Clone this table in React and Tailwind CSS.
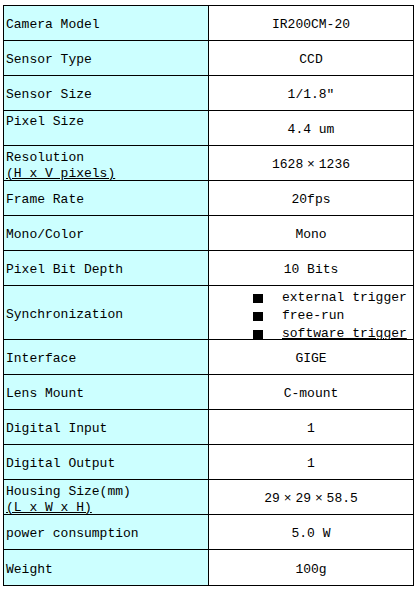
const rows = [
  { l: ["Camera Model"], r: "IR200CM-20" },
  { l: ["Sensor Type"], r: "CCD" },
  { l: ["Sensor Size"], r: "1/1.8″" },
  { l: ["Pixel Size"], r: "4.4 um", top: "pt-[3px]" },
  { l: ["Resolution", "(H x V pixels)"], r: "1628×1236", top: "pt-[4px]" },
  { l: ["Frame Rate"], r: "20fps" },
  { l: ["Mono/Color"], r: "Mono" },
  { l: ["Pixel Bit Depth"], r: "10 Bits" },
  { l: ["Synchronization"], sync: true },
  { l: ["Interface"], r: "GIGE" },
  { l: ["Lens Mount"], r: "C-mount" },
  { l: ["Digital Input"], r: "1" },
  { l: ["Digital Output"], r: "1" },
  { l: ["Housing Size(mm)", "(L x W x H)"], r: "29×29×58.5", top: "pt-[4px]" },
  { l: ["power consumption"], r: "5.0 W" },
  { l: ["Weight"], r: "100g" },
];

function Value({ text }) {
  const parts = text.split("×");
  return (
    <span className="whitespace-pre">
      {parts.map((p, i) => (
        <span key={i}>
          {p}
          {i < parts.length - 1 && (
            <span className="inline-block w-[15.6px] text-center">×</span>
          )}
        </span>
      ))}
    </span>
  );
}

export default function App() {
  return (
    <div
      className="w-[418px] h-[589px] bg-white pt-[5px] pl-[3px] text-black text-[13px]"
      style={{ fontFamily: '"Liberation Mono", "DejaVu Sans Mono", monospace' }}
    >
      <div className="w-[411px] border border-black">
        {rows.map((row, i) => {
          const last = i === rows.length - 1;
          const h = row.sync ? "h-[54px]" : "h-[35px]";
          return (
            <div
              key={i}
              className={`flex ${h} ${last ? "" : "border-b border-black"}`}
            >
              <div
                className={`w-[205px] shrink-0 border-r border-black bg-[#ccffff] pl-[2px] flex flex-col leading-[16px] whitespace-pre ${
                  row.top ? row.top + " justify-start" : "pt-[4px] justify-center"
                }`}
              >
                {row.l.map((t, j) => (
                  <div key={j} className={j === 1 ? "underline underline-offset-[1px]" : ""}>
                    {t}
                  </div>
                ))}
              </div>
              {row.sync ? (
                <div className="flex-1 flex flex-col pl-[44px] pt-[3px] leading-[18px]">
                  {["external trigger", "free-run", "software trigger"].map((t, j) => (
                    <div key={j} className="flex items-center h-[18px] shrink-0">
                      <span className="w-[10px] h-[9px] bg-black shrink-0" />
                      <span
                        className={`ml-[19px] whitespace-pre ${
                          j === 2 ? "underline underline-offset-[1px]" : ""
                        }`}
                      >
                        {t}
                      </span>
                    </div>
                  ))}
                </div>
              ) : (
                <div className="flex-1 flex items-center justify-center pt-[4px] leading-[16px]">
                  <Value text={row.r} />
                </div>
              )}
            </div>
          );
        })}
      </div>
    </div>
  );
}
